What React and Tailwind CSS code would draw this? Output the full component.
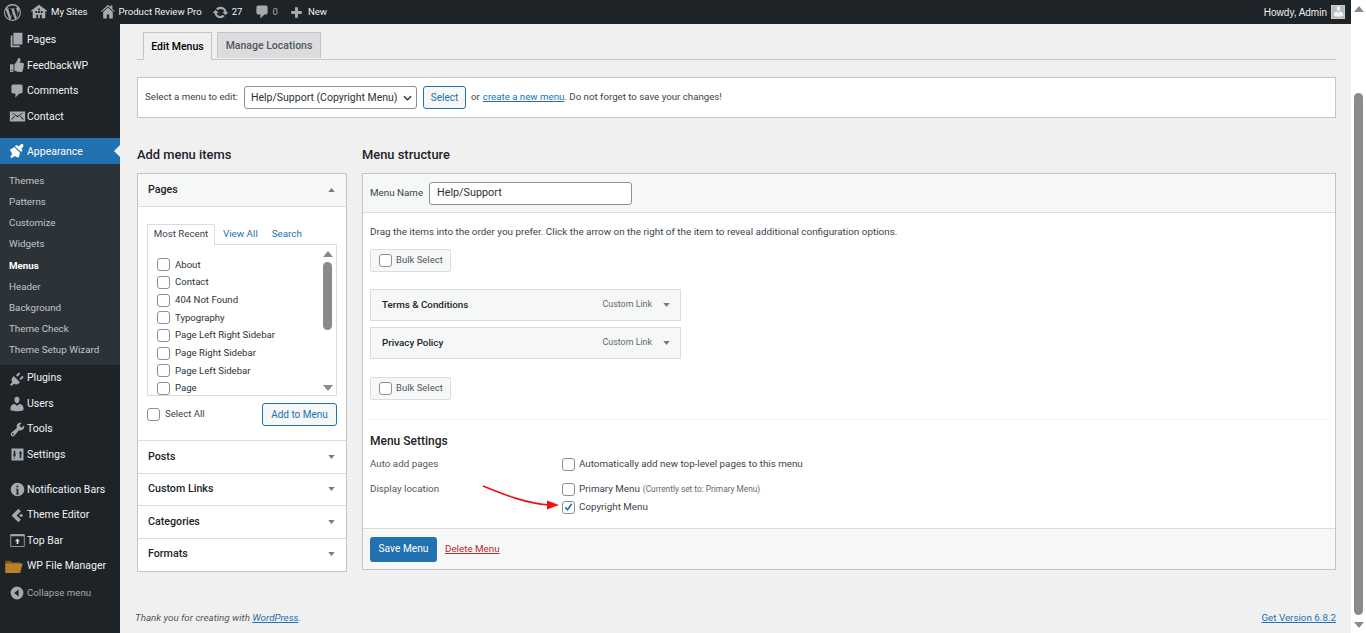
import React from "react";
import { FaThumbsUp } from "react-icons/fa";

const D = {
  wp: "M20 10a10 10 0 1 1-20 0 10 10 0 0 1 20 0zM1.3 10c0 3.4 2 6.4 4.9 7.8L2 6.4A8.6 8.6 0 0 0 1.3 10zm14.6-.4c0-1.100-.4-1.800-.7-2.300-.4-.7-.8-1.300-.8-2 0-.8.600-1.500 1.400-1.500h.1A8.700 8.700 0 0 0 3 5.400h.6c.9 0 2.300-.1 2.300-.1.500 0 .5.700.1.700 0 0-.5.100-1 .1l3.200 9.400 1.900-5.700-1.300-3.700c-.5 0-.9-.1-.9-.1-.5 0-.4-.7 0-.7 0 0 1.400.1 2.300.1.900 0 2.300-.1 2.300-.1.500 0 .5.700.1.700 0 0-.5.100-1 .1l3.100 9.300.9-2.900c.4-1.200.7-2.100.7-2.900zM10.200 10.700l-2.600 7.500a8.700 8.700 0 0 0 5.300-.1l-.1-.1-2.600-7.300zm7.400-4.900.1.900c0 .9-.2 1.900-.7 3.100l-2.700 7.700a8.700 8.700 0 0 0 3.300-11.700z",
  sites: "M10 2 1 8.500l1 1.200 1-.7V17h4v-4h2v4h2v-4h2v4h4V9l1 .7 1-1.200zM6 9h2v2H6zm3-3h2v2H9zm0 3h2v2H9zm3 0h2v2h-2z",
  home: "M16 8.500 10 3 4 8.500 2.500 10 1.500 9l8.500-8 3 2.800V2h2.500v4.200L18.500 9l-1 1zM4 10l6-5.500 6 5.500v8h-4.500v-5h-3v5H4z",
  update: "M10.200 3.280c3.530 0 6.430 2.610 6.920 6h2.080l-3.500 4-3.500-4h2.320a4.439 4.439 0 0 0-4.320-3.390c-1.220 0-2.300.49-3.120 1.320L4.700 5.340A7.010 7.010 0 0 1 10.200 3.280zm-.4 13.440c-3.520 0-6.430-2.610-6.920-6H.8l3.500-4 3.500 4H5.480a4.439 4.439 0 0 0 4.320 3.390c1.220 0 2.300-.49 3.120-1.320l1.880 1.870a7.010 7.010 0 0 1-5.500 2.060z",
  comment: "M5 2h10a2 2 0 0 1 2 2v7a2 2 0 0 1-2 2h-2l-5 5v-5H5a2 2 0 0 1-2-2V4a2 2 0 0 1 2-2z",
  plus: "M8 3h4v5h5v4h-5v5H8v-5H3V8h5z",
  pages: "M6 15V2h10v13H6zm-1 1h8v2H3V5h2v11z",
  mail: "M1 4h18v12H1zm2.500 2 6.500 5 6.500-5-.5-.5-6 4-6-4zM3 14.500 7 10l-.8-.6L3 13zm14 0V13l-3.200-3.600-.8.600z",
  brush: "M14.480 11.060 7.410 3.990l1.500-1.500 3.500 1.500 2.200-2.200c.8-.8 2.100-.8 2.900 0s.8 2.100 0 2.900l-1.800 2.200 1.300 3-2.500 1.170zM13.700 12.200 6.600 5.100c-1.400 1.500-3.400 2.500-5.400 2.600.5 2.200 1.600 4.200 3 5.800-.9 1.200-1.800 2.500-2.400 3.900.6.600 1.100 1.100 1.700 1.200 1.300-.7 2.600-1.500 3.800-2.500 1.500 1.300 3.400 1.900 5.300 1.700 0-1.800.7-3.300 1.100-5.600z",
  plugin: "M13.110 4.360 9.870 7.600 8 5.730l3.240-3.240c.350-.340 1.050-.340 1.400 0l.470.470c.390.390.390 1.010 0 1.400zm4.500 4.500-3.240 3.240-1.870-1.870 3.240-3.240c.350-.340 1.050-.340 1.400 0l.470.470c.390.390.390 1.010 0 1.400zM5.020 6.760l8.220 8.220-1.400 1.400c-1.900 1.900-4.700 2-6.700.6L2 20l-2-2 3-3c-1.400-2-1.300-4.800.6-6.700z",
  user: "M10 9.250c-2.270 0-2.730-3.440-2.730-3.440C7 4.020 7.820 2 9.970 2c2.160 0 2.980 2.020 2.710 3.810 0 0-.41 3.440-2.680 3.440zm0 2.570L12.720 10c2.390 0 4.520 2.330 4.520 4.530v2.490s-3.650 1.130-7.240 1.130c-3.650 0-7.240-1.130-7.240-1.130v-2.490c0-2.250 1.940-4.480 4.470-4.480z",
  tool: "M16.680 9.770c-1.340 1.340-3.300 1.670-4.950.99l-5.410 6.520c-.99.990-2.590.990-3.580 0s-.99-2.590 0-3.580l6.520-5.420c-.68-1.650-.35-3.610.99-4.950 1.280-1.280 3.120-1.620 4.720-1.060l-2.890 2.890 2.820 2.820 2.860-2.870c.53 1.580.18 3.400-1.080 4.660zM3.810 16.210c.4.390 1.030.39 1.420 0 .4-.4.400-1.030 0-1.420-.390-.4-1.020-.4-1.420 0-.39.390-.39 1.020 0 1.420z",
  info: "M10 2a8 8 0 1 1 0 16 8 8 0 0 1 0-16zm1 4.500a1.200 1.200 0 1 0-2.400 0 1.200 1.200 0 0 0 2.400 0zM11 15V9H8v1h1v5h-1v1h4v-1z",
  editor: "M11 2 3 10l8 8 3-3-5-5 5-5zm3 6-2 2 2 2 3-2z",
  back: "M10 2a8 8 0 1 1 0 16 8 8 0 0 1 0-16zm2 3.500L6.500 10l5.500 4.500z",
};

const Ic = ({ d, size = 20, color = "#a7aaad", className = "" }) => (
  <svg viewBox="0 0 20 20" width={size} height={size} fill={color} fillRule="evenodd" className={"block shrink-0 " + className}>
    <path d={d} />
  </svg>
);

const Caret = ({ up, color = "#787c82" }) => (
  <svg viewBox="0 0 8 5" width="7" height="4" fill={color} className="block shrink-0">
    <path d={up ? "M4 0l4 5H0z" : "M0 0h8L4 5z"} />
  </svg>
);

const Settings = () => (
  <svg viewBox="0 0 20 20" width="15" height="15" fill="#a7aaad" fillRule="evenodd" className="block shrink-0">
    <path d="M2 2h16v16H2zm3 3v5H3.800L6 13.500 8.200 10H7V5zm1 11v-2H5v2zm8-11-2.200 3.500H13V15h2V8.500h1.200zM14 16v0z" />
  </svg>
);

const TopBarIc = () => (
  <svg viewBox="0 0 20 20" width="17" height="17" className="block shrink-0">
    <path d="M2 3h16v14H2z" fill="#1d2327" stroke="#a7aaad" strokeWidth="1" />
    <path d="M2 3h16v2H2z" fill="#a7aaad" />
    <path d="M10 7.500 13 11h-2v3H9v-3H7z" fill="#e0e0e0" />
  </svg>
);

const Folder = () => (
  <svg viewBox="0 0 20 16" width="18" height="14" className="block shrink-0 -translate-x-[3px]">
    <path d="M0 2h6l2 2h9v3H0z" fill="#7a5a20" />
    <path d="M0 16V5h20l-3 11z" fill="#b9812a" />
  </svg>
);

const NavItem = ({ icon, label }) => (
  <div className="flex items-center pl-[7px] text-[#f0f0f1] text-[10.500px] whitespace-nowrap h-[25.6px]">
    <div className="w-[20px] flex justify-center">{icon}</div>
    <span>{label}</span>
  </div>
);

const Sub = ({ label, b }) => (
  <div className={"h-[21.1px] flex items-center pl-[9px] text-[9.800px] whitespace-nowrap " + (b ? "text-white font-bold" : "text-[#c3c4c7]")}>{label}</div>
);

const Cb = ({ checked, className = "" }) => (
  <span className={"inline-flex items-center justify-center w-[13px] h-[13px] rounded-[3px] border border-[#8c8f94] bg-white shrink-0 " + className}>
    {checked && (
      <svg viewBox="0 0 12 12" width="12" height="12" fill="none" stroke="#2271b1" strokeWidth="1.800">
        <path d="M2.500 6.500 5 9l4.500-6.500" />
      </svg>
    )}
  </span>
);

const BulkSelect = () => (
  <div className="w-[81px] h-[23px] flex items-center pl-[8px] gap-[4px] bg-[#f6f7f7] border border-[#dcdcde] rounded-[2px] text-[9.500px] text-[#50575e]">
    <Cb />
    <span>Bulk Select</span>
  </div>
);

const MenuRow = ({ label, mt }) => (
  <div className={"w-[311px] h-[32px] flex items-center pl-[11px] pr-[10px] bg-[#f6f7f7] border border-[#dcdcde] " + mt}>
    <span className="text-[9.800px] font-medium text-[#1d2327] flex-1">{label}</span>
    <span className="text-[8.900px] text-[#646970]">Custom Link</span>
    <span className="ml-[11px]"><Caret /></span>
  </div>
);

const Accordion = ({ label }) => (
  <div className="h-[32.500px] flex items-center justify-between pl-[10px] pr-[11px] border-t border-[#dcdcde] bg-white">
    <span className="text-[10.700px] font-medium text-[#1d2327]">{label}</span>
    <Caret />
  </div>
);

const Check = ({ label }) => (
  <div className="h-[17.700px] flex items-center">
    <Cb className="ml-[9px] mr-[5px]" />
    <span className="text-[9.600px] text-[#2c3338]">{label}</span>
  </div>
);

export default function App() {
  return (
    <div className="w-[1366px] h-[633px] overflow-hidden flex flex-col bg-[#f0f0f1] font-['Roboto',sans-serif] relative">
      {/* admin bar */}
      <div className="h-[24px] bg-[#1d2327] flex items-center text-[9.600px] text-[#f0f0f1] shrink-0 w-[1351px]">
        <Ic d={D.wp} size={17} className="ml-[4px]" />
        <Ic d={D.sites} size={18} className="ml-[9px]" />
        <span className="ml-[3px]">My Sites</span>
        <Ic d={D.home} size={16} className="ml-[12px]" />
        <span className="ml-[3px]">Product Review Pro</span>
        <Ic d={D.update} size={17} className="ml-[10px]" />
        <span className="ml-[3px]">27</span>
        <Ic d={D.comment} size={16} className="ml-[11px]" />
        <span className="ml-[3px] text-[#a7aaad]">0</span>
        <Ic d={D.plus} size={15} className="ml-[11px]" />
        <span className="ml-[4px]">New</span>
        <span className="ml-auto mr-[4px] font-['Liberation_Sans',sans-serif] text-[10px]">Howdy, Admin</span>
        <div className="w-[14px] h-[14px] mr-[6px] bg-[#bbb] border border-[#ccc] flex items-end justify-center overflow-hidden">
          <Ic d={D.user} size={13} color="#f2f2f2" />
        </div>
      </div>

      <div className="flex flex-1 min-h-0">
        {/* sidebar */}
        <div className="w-[120px] shrink-0 bg-[#1d2327] pt-[3px] relative">
          <NavItem icon={<Ic d={D.pages} size={18} />} label="Pages" />
          <NavItem icon={<FaThumbsUp size={14} color="#a7aaad" />} label="FeedbackWP" />
          <NavItem icon={<Ic d={D.comment} size={16} />} label="Comments" />
          <NavItem icon={<Ic d={D.mail} size={17} />} label="Contact" />
          <div className="h-[26px] mt-[9px] bg-[#2271b1] flex items-center pl-[7px] text-[10.500px] text-white relative">
            <div className="w-[20px] flex justify-center"><Ic d={D.brush} size={16} color="#fff" /></div>
            <span>Appearance</span>
            <span className="absolute right-0 top-[7px] border-y-[6px] border-y-transparent border-r-[6px] border-r-[#f0f0f1]" />
          </div>
          <div className="bg-[#2c3338] pt-[6.600px] h-[201px]">
            {["Themes", "Patterns", "Customize", "Widgets"].map((s) => <Sub key={s} label={s} />)}
            <Sub label="Menus" b />
            {["Header", "Background", "Theme Check", "Theme Setup Wizard"].map((s) => <Sub key={s} label={s} />)}
          </div>
          <NavItem icon={<Ic d={D.plugin} size={15} />} label="Plugins" />
          <NavItem icon={<Ic d={D.user} size={18} />} label="Users" />
          <NavItem icon={<Ic d={D.tool} size={17} />} label="Tools" />
          <NavItem icon={<Settings />} label="Settings" />
          <div className="h-[9px]" />
          <NavItem icon={<Ic d={D.info} size={17} />} label="Notification Bars" />
          <NavItem icon={<Ic d={D.editor} size={17} />} label="Theme Editor" />
          <NavItem icon={<TopBarIc />} label="Top Bar" />
          <NavItem icon={<Folder />} label="WP File Manager" />
          <div className="flex items-center h-[26px] mt-[1px] pl-[7px] text-[9.700px] text-[#a7aaad]">
            <div className="w-[20px] flex justify-center"><Ic d={D.back} size={16} /></div>
            <span>Collapse menu</span>
          </div>
        </div>

        {/* content */}
        <div className="w-[1231px] shrink-0 pl-[17px] pr-[15px] flex flex-col">
          <div className="h-[36px] flex items-end border-b border-[#c3c4c7] pl-[6px] gap-[5px] shrink-0">
            <div className="h-[28px] -mb-px w-[69px] pt-[1px] flex items-center justify-center bg-[#f0f0f1] border border-[#c3c4c7] border-b-[#f0f0f1] text-[10.500px] font-medium text-black">Edit Menus</div>
            <div className="h-[26px] mb-px w-[104px] flex items-center justify-center bg-[#dcdcde] border border-[#c3c4c7] border-b-0 text-[10.500px] font-medium text-[#50575e]">Manage Locations</div>
          </div>

          <div className="mt-[17px] h-[41px] bg-white border border-[#c3c4c7] flex items-center pl-[7px] text-[9.700px] text-[#3c434a] shrink-0">
            <span className="w-[99px]">Select a menu to edit:</span>
            <div className="w-[173px] h-[23px] border border-[#8c8f94] rounded-[3px] bg-white flex items-center pl-[6px] text-[10.500px] text-[#2c3338] relative">
              <span>Help/Support (Copyright Menu)</span>
              <svg viewBox="0 0 10 6" width="9" height="6" fill="none" stroke="#2c3338" strokeWidth="1.500" className="absolute right-[4px] top-[8px]"><path d="M1 1l4 4 4-4" /></svg>
            </div>
            <div className="ml-[6px] w-[43px] h-[23px] flex items-center justify-center border border-[#2271b1] rounded-[3px] bg-[#f6f7f7] text-[#2271b1] text-[10px]">Select</div>
            <span className="ml-[5px]">or</span>
            <span className="ml-[3px] text-[#2271b1] underline">create a new menu</span>
            <span>. Do not forget to save your changes!</span>
          </div>

          <div className="flex mt-[25px] gap-[15px] flex-1 min-h-0">
            {/* left */}
            <div className="w-[210px] shrink-0">
              <div className="h-[30px] text-[12.900px] font-medium text-[#1d2327] leading-[24px]">Add menu items</div>
              <div className="border border-[#c3c4c7] bg-white h-[399px]">
                <div className="h-[33px] flex items-center justify-between pl-[10px] pr-[11px] bg-[#f6f7f7] border-b border-[#dcdcde]">
                  <span className="text-[10.700px] font-medium text-[#1d2327]">Pages</span>
                  <Caret up />
                </div>
                <div className="px-[9px] pt-[17px] h-[233px]">
                  <div className="flex items-end h-[20px] text-[9.800px]">
                    <div className="h-[21px] w-[68px] pb-[2px] flex items-center justify-center bg-white border border-[#dcdcde] border-b-0 text-[#3c434a] relative top-px z-10 text-[9.700px]">Most Recent</div>
                    <span className="ml-[8px] mb-[2px] text-[#2271b1]">View All</span>
                    <span className="ml-[14px] mb-[2px] text-[#2271b1]">Search</span>
                  </div>
                  <div className="border border-[#dcdcde] h-[152px] relative flex">
                    <div className="flex-1 pt-[11px]">
                      {["About", "Contact", "404 Not Found", "Typography", "Page Left Right Sidebar", "Page Right Sidebar", "Page Left Sidebar", "Page"].map((p) => <Check key={p} label={p} />)}
                    </div>
                    <div className="w-[15px] mr-[1px] flex flex-col items-center pt-[6px]">
                      <span className="border-x-[5px] border-x-transparent border-b-[6px] border-b-[#8a8a8a]" />
                      <span className="w-[9px] h-[68px] rounded-[5px] bg-[#8a8a8a] mt-[5px]" />
                      <span className="border-x-[5px] border-x-transparent border-t-[6px] border-t-[#8a8a8a] mt-auto mb-[4px]" />
                    </div>
                  </div>
                  <div className="mt-[7px] flex items-center justify-between">
                    <div className="flex items-center">
                      <Cb className="mr-[5px]" />
                      <span className="text-[9.600px] text-[#3c434a]">Select All</span>
                    </div>
                    <div className="w-[75px] h-[23px] border border-[#2271b1] rounded-[3px] bg-[#f6f7f7] text-[#2271b1] text-[10px] flex items-center justify-center">Add to Menu</div>
                  </div>
                </div>
                {["Posts", "Custom Links", "Categories", "Formats"].map((s) => <Accordion key={s} label={s} />)}
              </div>
            </div>

            {/* right */}
            <div className="w-[974px] shrink-0">
              <div className="h-[30px] text-[12.900px] font-medium text-[#1d2327] leading-[24px]">Menu structure</div>
              <div className="h-[397px] border border-[#c3c4c7] bg-white flex flex-col">
                <div className="h-[39px] bg-[#f6f7f7] border-b border-[#dcdcde] flex items-center pl-[7px] shrink-0">
                  <span className="w-[59px] text-[9.800px] text-[#3c434a]">Menu Name</span>
                  <div className="w-[203px] h-[23px] mt-[1px] bg-white border border-[#8c8f94] rounded-[3px] flex items-center pl-[7px] text-[10.800px] text-[#2c3338]">Help/Support</div>
                </div>
                <div className="flex-1 pl-[7px] pr-[8px] pt-[12px]">
                  <div className="text-[9.900px] text-[#3c434a] h-[14px] leading-[14px]">Drag the items into the order you prefer. Click the arrow on the right of the item to reveal additional configuration options.</div>
                  <div className="mt-[10px]"><BulkSelect /></div>
                  <MenuRow label="Terms & Conditions" mt="mt-[17px]" />
                  <MenuRow label="Privacy Policy" mt="mt-[6px]" />
                  <div className="mt-[18px]"><BulkSelect /></div>
                  <div className="mt-[19px] pt-[13px] border-t border-[#f0f0f1]">
                    <div className="text-[12px] font-medium text-[#1d2327] h-[17px] leading-[17px]">Menu Settings</div>
                    <div className="flex mt-[6px] items-center h-[16px]">
                      <span className="w-[192px] text-[9.800px] text-[#50575e]">Auto add pages</span>
                      <Cb className="mr-[4px]" />
                      <span className="text-[9.800px] text-[#3c434a]">Automatically add new top-level pages to this menu</span>
                    </div>
                    <div className="flex mt-[9px] items-center h-[16px]">
                      <span className="w-[192px] text-[9.800px] text-[#50575e]">Display location</span>
                      <Cb className="mr-[4px]" />
                      <span className="text-[9.800px] text-[#3c434a]">Primary Menu</span>
                      <span className="ml-[3px] text-[8.300px] text-[#646970]">(Currently set to: Primary Menu)</span>
                    </div>
                    <div className="flex mt-[2px] items-center h-[16px] pl-[192px]">
                      <Cb checked className="mr-[4px]" />
                      <span className="text-[9.800px] text-[#3c434a]">Copyright Menu</span>
                    </div>
                  </div>
                </div>
                <div className="h-[41px] bg-[#f6f7f7] border-t border-[#dcdcde] flex items-center pl-[7px] shrink-0">
                  <div className="w-[67px] h-[25px] rounded-[3px] bg-[#2271b1] text-white text-[10.200px] flex items-center justify-center">Save Menu</div>
                  <span className="ml-[8px] text-[9.800px] text-[#b32d2e] underline">Delete Menu</span>
                </div>
              </div>
            </div>
          </div>

          <div className="flex justify-between h-[27px] pt-[5px] text-[9.800px] text-[#50575e] shrink-0">
            <span className="italic -ml-[2px]">Thank you for creating with <span className="text-[#2271b1] underline">WordPress</span>.</span>
            <span className="text-[#2271b1] underline">Get Version 6.8.2</span>
          </div>
        </div>
      </div>

      {/* window scrollbar */}
      <div className="absolute top-0 right-0 bottom-0 w-[15px] bg-white flex flex-col items-center pt-[6px] pb-[5px]">
        <span className="border-x-[5px] border-x-transparent border-b-[6px] border-b-[#8a8a8a]" />
        <span className="w-[9px] h-[522px] rounded-[5px] bg-[#8a8a8a] mt-[81px]" />
        <span className="border-x-[5px] border-x-transparent border-t-[6px] border-t-[#8a8a8a] mt-auto" />
      </div>

      {/* annotation arrow */}
      <svg className="absolute left-[480px] top-[482px]" width="82" height="32" viewBox="0 0 82 32" fill="none">
        <path d="M3 4c22 9 42 17 66 19" stroke="#f01010" strokeWidth="1.600" />
        <path d="M79 23l-12 4.500v-9z" fill="#f01010" />
      </svg>
    </div>
  );
}
